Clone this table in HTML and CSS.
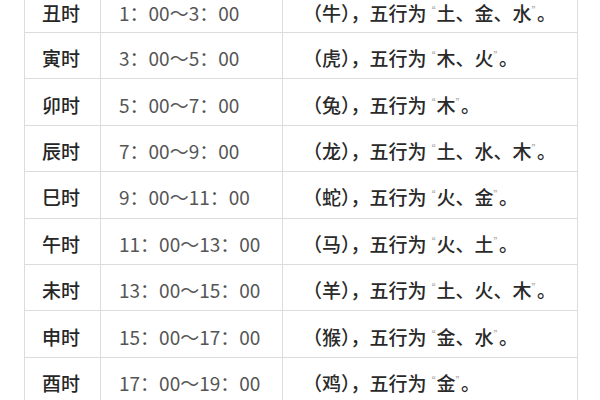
FILE: index.html
```html
<!DOCTYPE html>
<html>
<head>
<meta charset="utf-8">
<link rel="stylesheet" href="styles.css">
</head>
<body>
<div class="page">
<table class="shichen">
<tr class="first"><td class="name">丑时</td><td class="time">1：00～3：00</td><td class="desc">（牛），五行为<q>土、金、水</q>。</td></tr>
<tr><td class="name">寅时</td><td class="time">3：00～5：00</td><td class="desc">（虎），五行为<q>木、火</q>。</td></tr>
<tr><td class="name">卯时</td><td class="time">5：00～7：00</td><td class="desc">（兔），五行为<q>木</q>。</td></tr>
<tr><td class="name">辰时</td><td class="time">7：00～9：00</td><td class="desc">（龙），五行为<q>土、水、木</q>。</td></tr>
<tr><td class="name">巳时</td><td class="time">9：00～11：00</td><td class="desc">（蛇），五行为<q>火、金</q>。</td></tr>
<tr><td class="name">午时</td><td class="time">11：00～13：00</td><td class="desc">（马），五行为<q>火、土</q>。</td></tr>
<tr><td class="name">未时</td><td class="time">13：00～15：00</td><td class="desc">（羊），五行为<q>土、火、木</q>。</td></tr>
<tr><td class="name">申时</td><td class="time">15：00～17：00</td><td class="desc">（猴），五行为<q>金、水</q>。</td></tr>
<tr><td class="name">酉时</td><td class="time">17：00～19：00</td><td class="desc">（鸡），五行为<q>金</q>。</td></tr>
</table>
</div>
</body>
</html>
```
FILE: styles.css
```css
html, body {
  margin: 0;
  padding: 0;
  background: #fff;
  overflow: hidden;
}
.page {
  width: 600px;
  height: 400px;
  overflow: hidden;
  padding-left: 24px;
  box-sizing: border-box;
}
.shichen {
  border-collapse: collapse;
  width: 554px;
  font-family: "Noto Sans CJK SC", "Liberation Sans", sans-serif;
  font-size: 19px;
  font-weight: 500;
  color: #2a2a2a;
  border-right: 1px solid #d8d8d8;
  border-left: 1px solid #e2e2e2;
}
.shichen td {
  border: 1px solid #dcdcdc;
  height: 46.4px;
  padding: 4px 0 0 17px;
  box-sizing: border-box;
  white-space: nowrap;
  line-height: 1;
}
.shichen .first td {
  border-top: none;
  height: 32.5px;
  vertical-align: top;
  padding-top: 3px;
}
.shichen .name {
  width: 76px;
  color: #262626;
}
.shichen .time {
  width: 182px;
  color: #555;
  font-weight: 400;
  padding-left: 18px;
}
.shichen .desc {
  padding-left: 20px;
}
.shichen q {
  quotes: "\201C" "\201D";
}
.shichen q::before,
.shichen q::after {
  font-size: 9px;
  color: #aaa;
  vertical-align: 7px;
  letter-spacing: 1px;
}
```
